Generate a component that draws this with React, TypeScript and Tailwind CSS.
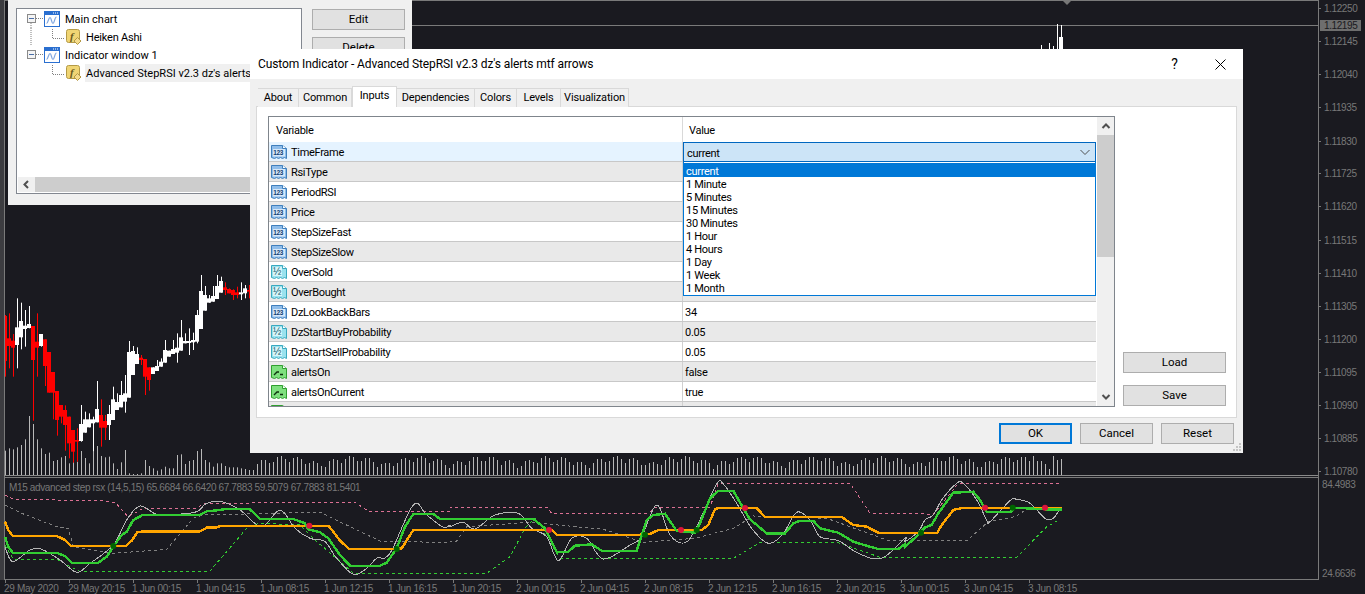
import React from 'react';

type Pt = [number, number];

// chart data is traced from the screenshot at 3x, so it is scaled back here
const scale = (ox: number, pts: Pt[]): Pt[] => pts.map(([x, y]) => [ox + x / 3, 470 + y / 3]);
const join3 = (a: Pt[], b: Pt[], c: Pt[]): Pt[] => [...scale(0, a), ...scale(450, b), ...scale(905, c)];
const line = (a: Pt[], b: Pt[], c: Pt[]) => join3(a, b, c).map(([x, y]) => `${x.toFixed(1)},${y.toFixed(1)}`).join(' ');

// catmull-rom through the points, the thin rsi line is a smooth curve
const smooth = (pts: Pt[]) => {
  let d = `M${pts[0][0].toFixed(1)} ${pts[0][1].toFixed(1)}`;
  for (let i = 0; i < pts.length - 1; i++) {
    const p0 = pts[Math.max(i - 1, 0)];
    const p1 = pts[i];
    const p2 = pts[i + 1];
    const p3 = pts[Math.min(i + 2, pts.length - 1)];
    const c1x = p1[0] + (p2[0] - p0[0]) / 6;
    const c1y = p1[1] + (p2[1] - p0[1]) / 6;
    const c2x = p2[0] - (p3[0] - p1[0]) / 6;
    const c2y = p2[1] - (p3[1] - p1[1]) / 6;
    d += `C${c1x.toFixed(1)} ${c1y.toFixed(1)} ${c2x.toFixed(1)} ${c2y.toFixed(1)} ${p2[0].toFixed(1)} ${p2[1].toFixed(1)}`;
  }
  return d;
};

const ORANGE = line(
  [[15,155],[25,180],[38,198],[170,198],[195,210],[212,228],[378,228],[395,212],[412,187],[430,184],[600,184],[620,173],[650,172],[665,167],[985,167],[1000,185],[1020,212],[1048,237],[1190,237],[1205,235],[1240,180],[1350,180]],
  [[0,180],[305,180],[320,194],[570,194],[600,192],[625,180],[755,180],[775,165],[795,118],[805,114],[920,114],[945,141],[1175,141],[1210,165],[1250,170],[1285,188],[1365,188]],
  [[0,188],[97,188],[110,165],[145,120],[175,113],[470,113]],
);
const GREEN = line(
  [[15,200],[25,230],[38,248],[170,248],[195,258],[215,278],[295,278],[320,260],[340,230],[365,195],[380,185],[400,150],[430,134],[600,134],[620,124],[660,120],[680,116],[748,116],[780,147],[880,147],[915,160],[925,178],[960,187],[985,205],[1020,255],[1050,287],[1140,287],[1160,278],[1190,235],[1215,170],[1240,132],[1300,132],[1320,147],[1350,147]],
  [[0,147],[250,147],[285,175],[320,245],[355,245],[375,227],[425,223],[455,242],[560,242],[590,150],[610,135],[645,131],[680,183],[735,188],[750,160],[780,85],[805,62],[850,62],[880,115],[900,148],[950,190],[1005,190],[1030,160],[1050,152],[1090,152],[1110,175],[1165,188],[1210,215],[1260,230],[1285,237],[1345,237],[1365,222]],
  [[0,230],[40,195],[60,172],[80,165],[100,130],[145,68],[205,65],[225,90],[245,125],[318,125],[330,113],[420,118],[470,118]],
);
const WHITE = smooth(join3(
  [[15,230],[38,275],[90,240],[125,238],[180,270],[230,307],[270,280],[340,225],[380,150],[420,108],[470,133],[530,133],[590,125],[620,100],[665,95],[720,120],[785,170],[840,120],[885,175],[930,205],[975,215],[1010,265],[1060,313],[1100,295],[1130,265],[1170,250],[1240,105],[1280,135],[1330,172],[1350,165]],
  [[0,170],[40,157],[75,177],[135,135],[205,130],[245,175],[290,200],[325,272],[365,205],[410,205],[460,267],[540,225],[575,200],[620,105],[660,195],[705,218],[740,170],[800,42],[820,42],[860,100],[905,175],[955,220],[1000,190],[1040,127],[1080,150],[1110,200],[1165,212],[1225,250],[1295,265],[1365,205]],
  [[0,215],[40,185],[60,150],[85,135],[110,90],[155,40],[175,40],[215,90],[245,150],[255,155],[315,92],[335,88],[375,100],[420,145],[445,145],[465,115]],
));
const PINK = line(
  [[15,75],[40,88],[300,92],[345,97],[375,130],[385,140],[430,115],[590,115],[610,100],[1065,97],[1105,124],[1350,124]],
  [[0,112],[290,112],[305,130],[595,130],[615,112],[780,112],[805,40],[1200,40],[1260,130],[1365,130]],
  [[0,130],[85,133],[160,40],[465,40]],
);
const GRAY = line(
  [[15,105],[60,128],[170,170],[205,175],[220,230],[340,250],[500,238],[580,145],[610,135],[960,127],[1140,213],[1350,218]],
  [[0,215],[20,213],[50,170],[240,157],[460,178],[580,217],[735,205],[850,175],[910,138],[1130,145],[1310,210],[1365,212]],
  [[0,212],[185,212],[250,155],[330,140],[370,115],[470,115]],
);
const GREEN_DASH = line(
  [[15,225],[40,268],[170,268],[240,305],[630,303],[740,175],[775,160],[900,165],[945,210],[1050,300],[1060,310],[1350,310]],
  [[0,310],[110,310],[180,260],[225,175],[255,145],[330,265],[850,265],[930,218],[1165,218],[1290,262],[1365,262]],
  [[0,262],[335,262],[425,170],[462,150]],
);

// [x, wickTop, wickBottom, bodyTop, bodyBottom, up]
const CANDLES: [number, number, number, number, number, number][] = [
  [16,165,350,168,303,0],[28,160,325,235,258,0],[40,222,350,242,263,0],[52,115,325,202,255,1],[64,128,268,183,232,1],
  [76,150,260,197,207,1],[88,138,205,192,204,1],[100,198,482,198,300,0],[112,160,350,245,263,0],[124,222,260,222,258,1],
  [136,238,378,238,318,0],[148,276,398,276,398,0],[160,336,478,336,398,0],[172,393,527,393,480,0],[184,435,490,435,470,0],
  [196,436,572,450,495,0],[208,470,595,470,550,0],[220,510,608,510,575,0],[232,505,605,540,545,0],[244,435,545,492,543,1],
  [256,455,518,478,518,1],[268,460,502,478,502,1],[280,470,575,478,490,1],[292,363,487,447,487,1],[304,418,560,465,503,0],
  [316,465,540,483,503,0],[328,435,540,462,495,1],[340,380,480,418,480,1],[352,400,450,426,450,1],[364,363,442,405,442,1],
  [376,345,458,400,425,1],[388,243,413,276,413,1],[400,258,345,273,345,1],[412,262,312,282,312,1],[424,285,315,293,300,0],
  [436,297,405,297,350,0],[448,322,392,322,360,0],[460,322,342,322,342,1],[472,300,333,318,333,1],[484,295,320,305,320,1],
  [496,240,308,270,308,1],[508,272,290,272,290,1],[520,240,282,267,282,1],[532,220,308,263,278,1],[544,180,272,232,272,1],
  [556,220,250,243,250,1],[568,205,285,243,249,1],[580,218,270,240,247,1],[592,150,250,165,245,1],[604,45,207,93,207,1],
  [616,78,152,105,152,1],[628,105,128,115,128,1],[640,78,125,108,125,1],[652,45,117,78,117,1],[664,50,98,63,98,1],
  [676,67,105,82,90,0],[688,85,100,87,100,0],[700,88,120,90,105,0],[712,80,115,97,105,0],[724,67,120,97,103,1],
  [736,75,115,85,100,1],[748,75,115,90,95,0],
];

const VOLUMES = [572,565,568,562,555,538,468,492,538,565,582,578,603,600,592,588,610,600,605,573,594,610,575,558,588,592,590,610,627,607,570,640,642,642,640,600,618,625,632,628,620,625,625,585,583,612,603,600,573,567,600,607,620,610,610,618,622,622,622,625,627,630];

// the part of the volume histogram that shows under the dialog
const LOW_VOLUMES = Array.from({ length: 203 }, (_, i) => {
  const x = 253 + i * 4;
  const h = 5 + 7 * Math.abs(Math.sin(i * 0.71)) + 7 * Math.abs(Math.sin(i * 0.19)) + (i > 190 && i % 5 === 0 ? 8 : 0);
  return { x, top: 475 - Math.round(h) };
});

const PRICES: [string, number][] = [
  ['1.12250', 8], ['1.12145', 41], ['1.12040', 74], ['1.11935', 107], ['1.11830', 141], ['1.11725', 173],
  ['1.11620', 206], ['1.11515', 240], ['1.11410', 273], ['1.11305', 306], ['1.11200', 339], ['1.11095', 372],
  ['1.10990', 405], ['1.10885', 438], ['1.10780', 471],
];

const TIMES = ['29 May 2020', '29 May 20:15', '1 Jun 00:15', '1 Jun 04:15', '1 Jun 08:15', '1 Jun 12:15', '1 Jun 16:15', '1 Jun 20:15', '2 Jun 00:15', '2 Jun 04:15', '2 Jun 08:15', '2 Jun 12:15', '2 Jun 16:15', '2 Jun 20:15', '3 Jun 00:15', '3 Jun 04:15', '3 Jun 08:15'];

const RED_DOTS: Pt[] = [[309.3, 525.7], [549, 530], [681, 530], [745, 508], [985, 507.7], [1045, 507.7]];
const GREEN_DOTS: Pt[] = [[113.3, 546], [396.7, 549], [645, 534.7], [696.7, 530], [921, 532.7], [1012.7, 507.7]];

const Chart = () => (
  <svg className="absolute left-0 top-0" width="1365" height="594" fontFamily="'Liberation Sans', sans-serif" fontSize="10">
    <rect x="0" y="0" width="1318" height="1" fill="#7a7a7a" />
    <path d="M1063 1h8l-4 4z" fill="#777777" />
    <rect x="405" y="25" width="913" height="1" fill="#7a7a7a" />

    {VOLUMES.map((top, i) => (
      <rect key={i} x={Math.round((16 + i * 12) / 3)} y={260 + top / 3} width="1" height={(645 - top) / 3} fill="#b8b8b8" />
    ))}
    {LOW_VOLUMES.map((v) => (
      <rect key={v.x} x={v.x} y={v.top} width="1" height={475 - v.top} fill="#b8b8b8" />
    ))}
    {CANDLES.map(([x, wt, wb, bt, bb, up]) => {
      const cx = Math.round(x / 3);
      const color = up ? '#ffffff' : '#ff0000';
      return (
        <g key={x} fill={color}>
          <rect x={cx} y={260 + wt / 3} width="1" height={(wb - wt) / 3} />
          <rect x={cx - 2} y={260 + bt / 3} width="4" height={(bb - bt) / 3} />
        </g>
      );
    })}
    <rect x="1057" y="24" width="1" height="30" fill="#ffffff" />
    <rect x="1059" y="37" width="4" height="17" fill="#ffffff" />
    <rect x="1061" y="25" width="1" height="14" fill="#ffffff" />
    <rect x="1041" y="45" width="1" height="8" fill="#ffffff" />
    <rect x="1049" y="43" width="1" height="8" fill="#ffffff" />
    <rect x="1053" y="46" width="1" height="8" fill="#ffffff" />

    <rect x="0" y="0" width="4" height="580" fill="#3c3c40" />
    <rect x="4" y="0" width="1" height="580" fill="#7a7a7a" />
    <rect x="4" y="475" width="1314" height="1" fill="#8a8a8a" />
    <rect x="4" y="477" width="1314" height="1" fill="#7a7a7a" />
    <rect x="4" y="579" width="1314" height="1" fill="#7a7a7a" />
    <rect x="1318" y="0" width="1" height="580" fill="#7a7a7a" />

    <g fill="none" shapeRendering="crispEdges">
      <polyline points={PINK} stroke="#db7093" strokeDasharray="3 3" />
      <polyline points={GRAY} stroke="#808080" strokeDasharray="3 3" />
      <polyline points={GREEN_DASH} stroke="#32cd32" strokeDasharray="3 3" />
      <path d={WHITE} stroke="#b4b4b4" />
      <polyline points={ORANGE} stroke="#ffa500" strokeWidth="2.4" />
      <polyline points={GREEN} stroke="#32cd32" strokeWidth="2.4" />
    </g>
    {RED_DOTS.map(([x, y]) => <circle key={x} cx={x} cy={y} r="3" fill="#dc143c" />)}
    {GREEN_DOTS.map(([x, y]) => <circle key={x} cx={x} cy={y} r="3" fill="#006400" />)}

    <g fill="#787878">
      {PRICES.map(([p, y]) => (
        <g key={p}>
          <rect x="1319" y={y} width="2" height="1" />
          <text x="1324" y={y + 4} letterSpacing="-0.4">{p}</text>
        </g>
      ))}
      <text x="1322" y="488" letterSpacing="-0.4">84.4983</text>
      <text x="1322" y="577" letterSpacing="-0.4">24.6636</text>
      <text x="9" y="490.5" letterSpacing="-0.36">M15 advanced step rsx (14,5,15) 65.6684 66.6420 67.7883 59.5079 67.7883 81.5401</text>
      {TIMES.map((t, i) => (
        <g key={t}>
          <rect x={5 + i * 64} y="580" width="1" height="3" />
          <text x={4 + i * 64} y="592" letterSpacing="-0.3">{t}</text>
        </g>
      ))}
    </g>
    <rect x="1320" y="20" width="41" height="11" fill="#6e6e6e" />
    <text x="1324" y="29" fill="#1a1a20" letterSpacing="-0.4">1.12195</text>
  </svg>
);

const Btn = ({ label, className = 'border border-[#adadad]' }: { label: string; className?: string }) => (
  <button className={`flex h-[21px] items-center justify-center bg-[#e1e1e1] pt-[1px] text-[11.5px] text-black ${className}`}>
    {label}
  </button>
);

const ChartIcon = () => (
  <svg width="16" height="16" viewBox="0 0 16 16" className="shrink-0">
    <rect x="0.5" y="0.5" width="15" height="15" fill="#ffffff" stroke="#2a6fd0" />
    <rect x="0" y="0" width="16" height="4" fill="#2a6fd0" />
    <path d="M9 2h1M11 2h1M13 2h1" stroke="#ffffff" />
    <path d="M2.5 12.5C4 12.5 4.5 6.5 6 6.5S7.5 12.5 9 12.5 10.500 6 12.500 6" fill="none" stroke="#7fa6e0" strokeWidth="1.200" />
  </svg>
);

const FuncIcon = () => (
  <svg width="16" height="16" viewBox="0 0 16 16" className="shrink-0">
    <rect x="0.5" y="0.5" width="13" height="13" rx="2" fill="#f0d574" stroke="#b49a46" />
    <text x="4" y="11" fontFamily="'Liberation Serif', serif" fontStyle="italic" fontWeight="700" fontSize="11" fill="#6b5a1c">f</text>
    <path d="M11.500 8.500l3.500 3.500-3.500 3.500-3.500-3.500z" fill="#f5dc8c" stroke="#b49a46" />
  </svg>
);

const RootGutter = ({ next }: { next?: boolean }) => (
  <svg width="26" height="18" className="shrink-0">
    {next && <path d="M13 13v5" stroke="#808080" strokeDasharray="1 1" />}
    <rect x="9.500" y="4.500" width="8" height="8" fill="#f4f4f4" stroke="#8a8a8a" />
    <path d="M11 8.500h5" stroke="#4a6ea8" />
    <path d="M18 8.500h7" stroke="#808080" strokeDasharray="1 1" />
  </svg>
);

const LeafGutter = ({ through }: { through?: boolean }) => (
  <svg width="48" height="18" className="shrink-0">
    {through && <path d="M13 0v18" stroke="#808080" strokeDasharray="1 1" />}
    <path d="M34.500 1v9M35 10.500h11" stroke="#808080" strokeDasharray="1 1" fill="none" />
  </svg>
);

const TreeWindow = () => (
  <div className="absolute left-[8px] top-0 flex h-[205px] w-[404px] gap-[10px] bg-[#f0f0f0] py-[8px] pl-[8px] pr-[7px]">
    <div className="flex h-[186px] w-[286px] flex-col justify-between overflow-hidden border border-[#828790] bg-white p-[1px] text-[11px] text-black">
      <div className="flex flex-col">
        <div className="flex h-[18px] items-center">
          <RootGutter next />
          <ChartIcon />
          <span className="ml-[5px] pt-[2px]">Main chart</span>
        </div>
        <div className="flex h-[18px] items-center">
          <LeafGutter through />
          <FuncIcon />
          <span className="ml-[4px] pt-[2px] tracking-[-0.2px]">Heiken Ashi</span>
        </div>
        <div className="flex h-[18px] items-center">
          <RootGutter />
          <ChartIcon />
          <span className="ml-[5px] pt-[2px]">Indicator window 1</span>
        </div>
        <div className="flex h-[18px] items-center">
          <LeafGutter />
          <FuncIcon />
          <span className="ml-[3px] flex h-[18px] items-center whitespace-nowrap bg-[#f0f0f0] px-[1px] pt-[2px]">Advanced StepRSI v2.3 dz's alerts mtf arrows</span>
        </div>
      </div>
      <div className="flex h-[15px] items-center bg-[#f0f0f0]">
        <svg width="17" height="15" className="shrink-0">
          <path d="M10 4l-3.500 3.500 3.500 3.500" fill="none" stroke="#505050" strokeWidth="2" />
        </svg>
        <div className="h-full flex-1 bg-[#cdcdcd]" />
      </div>
    </div>
    <div className="flex w-[93px] flex-col gap-[7px] pt-[1px]">
      <Btn label="Edit" />
      <Btn label="Delete" />
    </div>
  </div>
);

type Kind = 'int' | 'dbl' | 'bool';

const KIND_COLORS: Record<Kind, { fill: string; stroke: string }> = {
  int: { fill: '#8fbdea', stroke: '#3f7fbc' },
  dbl: { fill: '#9be2ee', stroke: '#3aa9bf' },
  bool: { fill: '#7fe07f', stroke: '#2f9f2f' },
};

const VarIcon = ({ kind }: { kind: Kind }) => {
  const c = KIND_COLORS[kind];
  return (
    <svg width="16" height="16" viewBox="0 0 16 16" className="shrink-0">
      <path d="M0.500 1.500h11l4 3v10l-2-1-2 1-2-1-2 1-2-1-2 1-3-1z" fill={c.fill} stroke={c.stroke} />
      <path d="M11.500 1.500v3h4" fill="#ffffff" stroke={c.stroke} />
      {kind === 'int' && (
        <>
          <rect x="2" y="5" width="12" height="7.500" fill="#d6e8f9" />
          <text x="2.200" y="11" fontFamily="'Liberation Sans', sans-serif" fontWeight="700" fontSize="6.500" fill="#123f73">123</text>
        </>
      )}
      {kind === 'dbl' && (
        <>
          <rect x="2" y="3" width="9" height="9" fill="#d8f5fa" />
          <text x="2" y="11" fontFamily="'Liberation Sans', sans-serif" fontSize="10" fill="#0d5b69">½</text>
        </>
      )}
      {kind === 'bool' && (
        <path d="M3 11l3-3h2M9 10.500h3" fill="none" stroke="#0d300d" strokeWidth="1.300" />
      )}
    </svg>
  );
};

const ROWS: { name: string; kind: Kind; value?: string }[] = [
  { name: 'TimeFrame', kind: 'int' },
  { name: 'RsiType', kind: 'int' },
  { name: 'PeriodRSI', kind: 'int' },
  { name: 'Price', kind: 'int' },
  { name: 'StepSizeFast', kind: 'int' },
  { name: 'StepSizeSlow', kind: 'int' },
  { name: 'OverSold', kind: 'dbl' },
  { name: 'OverBought', kind: 'dbl', value: '70.0' },
  { name: 'DzLookBackBars', kind: 'int', value: '34' },
  { name: 'DzStartBuyProbability', kind: 'dbl', value: '0.05' },
  { name: 'DzStartSellProbability', kind: 'dbl', value: '0.05' },
  { name: 'alertsOn', kind: 'bool', value: 'false' },
  { name: 'alertsOnCurrent', kind: 'bool', value: 'true' },
  { name: '', kind: 'bool' },
];

const TIMEFRAMES = ['1 Minute', '5 Minutes', '15 Minutes', '30 Minutes', '1 Hour', '4 Hours', '1 Day', '1 Week', '1 Month'];

const TABS = ['About', 'Common', 'Inputs', 'Dependencies', 'Colors', 'Levels', 'Visualization'];
const TAB_WIDTHS = ['w-[41px]', 'w-[53px]', 'w-[45px]', 'w-[78px]', 'w-[42px]', 'w-[44px]', 'w-[68px]'];

const TimeFrameDropdown = () => (
  <div className="absolute left-0 top-0 z-10 flex w-[413px] flex-col">
    <div className="flex h-[20px] items-center justify-between border border-[#0067c0] bg-[#cce4f7] pl-[3px] pr-[3px]">
      <span className="pt-[4px]">current</span>
      <svg width="14" height="14">
        <path d="M2.500 5l4.500 4.500 4.500-4.500" fill="none" stroke="#505050" />
      </svg>
    </div>
    <div className="flex flex-col border border-t-0 border-[#0078d7] bg-white py-[1px]">
      <div className="flex h-[14px] items-center bg-[#0078d7] pl-[2px] pt-[2px] leading-[13px] text-white">current</div>
      {TIMEFRAMES.map((t) => (
        <div key={t} className="flex h-[13px] items-center pl-[2px] pt-[2px] leading-[13px]">{t}</div>
      ))}
    </div>
  </div>
);

const Grid = () => (
  <div className="flex h-[291px] w-[847px] border border-[#7f858c] bg-white text-[11px] tracking-[-0.3px] text-black">
    <div className="flex w-[828px] flex-col">
      <div className="flex h-[25px] shrink-0">
        <div className="flex w-[414px] items-center border-r border-[#d9d9d9] pl-[7px] pt-[3px]">Variable</div>
        <div className="flex flex-1 items-center pl-[6px] pt-[3px]">Value</div>
      </div>
      <div className="relative flex-1 overflow-hidden">
        {ROWS.map((r, i) => (
          <div
            key={i}
            className={`flex h-[20px] border-b border-[#c8c8c8] ${i === 0 ? 'bg-[#e5f3ff]' : i % 2 === 1 ? 'bg-[#e9e9e9]' : 'bg-white'}`}
          >
            <div className="flex w-[414px] items-center gap-[4px] border-r border-[#d0d0d0] pl-[2px]">
              <VarIcon kind={r.kind} />
              <span className="pt-[3px]">{r.name}</span>
            </div>
            <div className="flex flex-1 items-center pl-[2px] pt-[3px]">{r.value}</div>
          </div>
        ))}
        <div className="absolute left-[414px] top-0">
          <TimeFrameDropdown />
        </div>
      </div>
    </div>
    <div className="ml-[1px] flex w-[17px] flex-col bg-[#f0f0f0]">
      <div className="flex h-[18px] items-center justify-center">
        <svg width="10" height="8"><path d="M1.500 6l3.500-3.500 3.500 3.500" fill="none" stroke="#505050" strokeWidth="2" /></svg>
      </div>
      <div className="h-[122px] bg-[#cdcdcd]" />
      <div className="flex-1" />
      <div className="flex h-[18px] items-center justify-center">
        <svg width="10" height="8"><path d="M1.500 2l3.500 3.500 3.500-3.500" fill="none" stroke="#505050" strokeWidth="2" /></svg>
      </div>
    </div>
  </div>
);

const Dialog = () => (
  <div className="absolute left-[250px] top-[49px] flex h-[404px] w-[993px] flex-col bg-[#f0f0f0] text-[12px] text-black">
    <div className="flex h-[30px] shrink-0 items-center justify-between bg-white pl-[8px]">
      <span className="tracking-[-0.11px]">Custom Indicator - Advanced StepRSI v2.3 dz's alerts mtf arrows</span>
      <div className="flex items-center">
        <div className="flex w-[45px] justify-center text-[14px]">?</div>
        <div className="flex w-[46px] justify-center">
          <svg width="11" height="11"><path d="M0.500 0.500l10 10M10.500 0.500l-10 10" stroke="#000000" /></svg>
        </div>
      </div>
    </div>
    <div className="relative flex flex-1 flex-col px-[6px] pt-[7px]">
      <div className="z-10 -mb-[1px] flex h-[21px] items-end pl-[2px] text-[11px] tracking-[-0.15px]">
        {TABS.map((t, i) => (
          <div
            key={t}
            className={`flex items-center justify-center border border-[#d9d9d9] ${TAB_WIDTHS[i]} ${t === 'Inputs' ? 'h-[21px] border-b-0 bg-white pb-[1px]' : 'h-[19px] border-b-0 border-l-0 bg-[#f0f0f0] pt-[1px]'}`}
          >
            {t}
          </div>
        ))}
      </div>
      <div className="flex h-[312px] gap-[8px] border border-[#d9d9d9] bg-white pl-[11px] pt-[9px]">
        <Grid />
        <div className="flex flex-1 flex-col justify-end gap-[12px] pb-[11px]">
          <Btn label="Load" className="w-[103px] border border-[#adadad]" />
          <Btn label="Save" className="w-[103px] border border-[#adadad]" />
        </div>
      </div>
      <div className="flex justify-end gap-[8px] pr-[3px] pt-[5px]">
        <Btn label="OK" className="w-[73px] border-2 border-[#0078d7]" />
        <Btn label="Cancel" className="w-[73px] border border-[#adadad]" />
        <Btn label="Reset" className="w-[73px] border border-[#adadad]" />
      </div>
      <svg width="8" height="8" className="absolute bottom-[2px] right-[2px]">
        <path d="M6 0h2v2h-2zM3 3h2v2h-2zM6 3h2v2h-2zM0 6h2v2h-2zM3 6h2v2h-2zM6 6h2v2h-2z" fill="#c4c4c4" />
      </svg>
    </div>
  </div>
);

export default function App() {
  return (
    <div className="relative h-[594px] w-[1365px] overflow-hidden bg-[#1a1a20] font-['Roboto',sans-serif]">
      <Chart />
      <TreeWindow />
      <Dialog />
    </div>
  );
}
